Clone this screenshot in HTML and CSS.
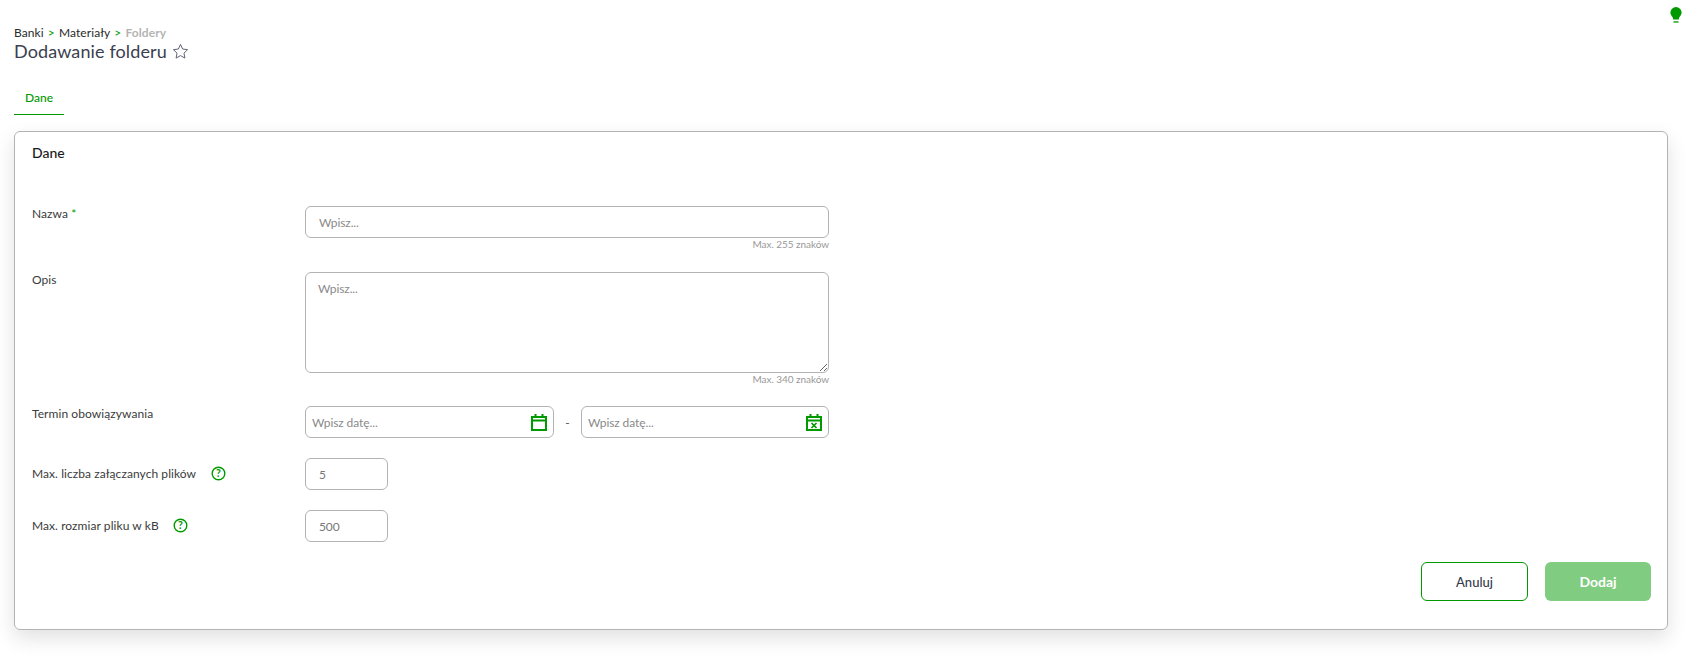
FILE: index.html
```html
<!DOCTYPE html>
<html lang="pl">
<head>
<meta charset="utf-8">
<title>Dodawanie folderu</title>
<link rel="stylesheet" href="styles.css">
</head>
<body>
<div class="topbar">
  <svg class="bulb" width="12" height="16" viewBox="0 0 12 16"><path d="M6 0a5.600 5.600 0 0 1 5.600 5.600c0 2.200-1.400 3.400-2.200 4.600-.3.500-.5 1-.5 2.300H3.100c0-1.300-.2-1.800-.5-2.300C1.800 9 .4 7.800.4 5.600A5.600 5.600 0 0 1 6 0z" fill="#009900"/><rect x="3.500" y="14.300" width="5" height="1.300" fill="#009900"/></svg>
</div>
<header class="head">
  <nav class="crumbs"><span>Banki</span><i>&gt;</i><span>Materiały</span><i>&gt;</i><span class="cur">Foldery</span></nav>
  <h1 class="title">Dodawanie folderu
    <svg class="star" width="17" height="17" viewBox="0 0 24 24"><path d="M12 2l3 6.500 7 .9-5.100 4.900 1.300 7-6.200-3.500-6.200 3.500 1.300-7L2 9.400l7-.9z" fill="none" stroke="#5c6270" stroke-width="1.400" stroke-linejoin="round"/></svg>
  </h1>
</header>
<div class="tabs"><a class="tab">Dane</a></div>
<main class="card">
  <h2 class="card-title">Dane</h2>
  <form class="form">
    <div class="row r-name">
      <label class="lbl">Nazwa <b>*</b></label>
      <div class="ctl">
        <input class="inp pad" placeholder="Wpisz...">
        <div class="hint">Max. 255 znaków</div>
      </div>
    </div>
    <div class="row r-desc">
      <label class="lbl">Opis</label>
      <div class="ctl">
        <textarea class="inp area" placeholder="Wpisz..."></textarea>
        <div class="hint">Max. 340 znaków</div>
      </div>
    </div>
    <div class="row r-date">
      <label class="lbl">Termin obowiązywania</label>
      <div class="ctl dates">
        <div class="date inp"><span class="ph">Wpisz datę...</span>
          <svg width="16" height="17" viewBox="0 0 16 17" fill="none" stroke="#009900" stroke-width="2"><rect x="1" y="3" width="14" height="13"/><path d="M1 6.500h14M4.500 0v3M11.500 0v3"/></svg>
        </div>
        <span class="dash">-</span>
        <div class="date inp"><span class="ph">Wpisz datę...</span>
          <svg width="16" height="17" viewBox="0 0 16 17" fill="none" stroke="#009900" stroke-width="2"><rect x="1" y="3" width="14" height="13"/><path d="M1 6.500h14M4.500 0v3M11.500 0v3"/><path d="M5.500 9l5 5M10.500 9l-5 5" stroke-width="1.700"/></svg>
        </div>
      </div>
    </div>
    <div class="row r-num">
      <label class="lbl">Max. liczba załączanych plików
        <svg class="help h-wide" width="15" height="15" viewBox="0 0 15 15"><circle cx="7.500" cy="7.500" r="6.300" fill="none" stroke="#009900" stroke-width="1.400"/><text x="7.500" y="11" text-anchor="middle" class="q">?</text></svg>
      </label>
      <div class="ctl"><input class="inp pad small" value="5"></div>
    </div>
    <div class="row r-num">
      <label class="lbl">Max. rozmiar pliku w kB
        <svg class="help" width="15" height="15" viewBox="0 0 15 15"><circle cx="7.500" cy="7.500" r="6.300" fill="none" stroke="#009900" stroke-width="1.400"/><text x="7.500" y="11" text-anchor="middle" class="q">?</text></svg>
      </label>
      <div class="ctl"><input class="inp pad small" value="500"></div>
    </div>
    <div class="actions">
      <button type="button" class="btn ghost">Anuluj</button>
      <button type="button" class="btn solid">Dodaj</button>
    </div>
  </form>
</main>
</body>
</html>
```
FILE: styles.css
```css
* { box-sizing: border-box; }
html, body { margin: 0; padding: 0; }
body {
  width: 1688px;
  height: 663px;
  overflow: hidden;
  background: #fff;
  color: #343a4a;
  font-family: "Lato", "Open Sans", sans-serif;
  font-size: 12px;
}
.topbar { height: 26px; display: flex; justify-content: flex-end; padding: 7px 6px 0 0; }
.bulb { display: block; }
.head { padding-left: 14px; }
.crumbs { display: flex; gap: 4px; height: 14px; line-height: 14px; font-size: 12px; color: #2a2a2a; letter-spacing: .1px; }
.crumbs i { font-style: normal; color: #009900; }
.crumbs .cur { color: #b4b4b4; font-weight: 700; }
.title { margin: 0; font-size: 18px; line-height: 22px; font-weight: 400; color: #3a4050; letter-spacing: .12px; display: flex; align-items: center; gap: 5px; }
.tabs { margin: 23px 0 0 14px; width: 50px; height: 30px; border-bottom: 1px solid #009900; text-align: center; }
.tab { display: block; line-height: 26px; font-size: 12px; font-weight: 500; color: #009900; }
.card {
  margin: 16px 20px 0 14px;
  height: 499px;
  border: 1px solid #b3b3b3;
  border-radius: 6px;
  padding: 12px 16px 0 17px;
  box-shadow: 0 8px 20px rgba(0,0,0,.12);
}
.card-title { margin: 0; font-size: 14px; line-height: 18px; font-weight: 500; color: #1a1a1a; }
.form { margin-top: 44px; }
.row { display: grid; grid-template-columns: 273px 524px; }
.r-name { height: 66px; }
.r-desc { height: 134px; }
.r-date { height: 52px; }
.r-num { height: 52px; }
.lbl { line-height: 16px; font-size: 12px; color: #3b3b3b; letter-spacing: .07px; }
.lbl b { color: #009900; font-weight: 400; }
.r-num .lbl { padding-top: 8px; }
.help { vertical-align: -3px; margin-left: 11px; }
.h-wide { margin-left: 12px; }
.q { font-size: 10.500px; font-weight: 700; fill: #009900; font-family: "Lato", sans-serif; }
.inp {
  display: block;
  width: 100%;
  border: 1px solid #b3b3b3;
  border-radius: 6px;
  background: #fff;
  outline: none;
  font: 12px "Lato", sans-serif;
  color: #777;
  height: 32px;
  letter-spacing: -.1px;
}
.inp::placeholder, .ph { color: #8a8a8a; }
.pad { padding: 0 13px; }
.area { height: 101px; padding: 8px 12px; resize: vertical; }
.small { width: 83px; }
.hint { text-align: right; font-size: 10px; line-height: 14px; margin-top: -1px; color: #999; letter-spacing: -.05px; }
.dates { display: flex; align-items: center; height: 32px; }
.date { flex: 0 0 249px; width: 249px; display: flex; align-items: center; justify-content: space-between; padding: 0 6px; }
.dash { flex: 1; text-align: center; color: #555; }
.date:last-child { flex-basis: 248px; width: 248px; }
.actions { display: flex; justify-content: flex-end; gap: 17px; }
.btn { width: 107px; height: 39px; border-radius: 6px; font: 500 13px "Lato", sans-serif; cursor: pointer; }
.ghost { background: #fff; border: 1px solid #009900; color: #343a4a; }
.solid { width: 106px; background: #80cc80; border: 0; color: #fff; font-weight: 700; font-size: 14px; }
```
